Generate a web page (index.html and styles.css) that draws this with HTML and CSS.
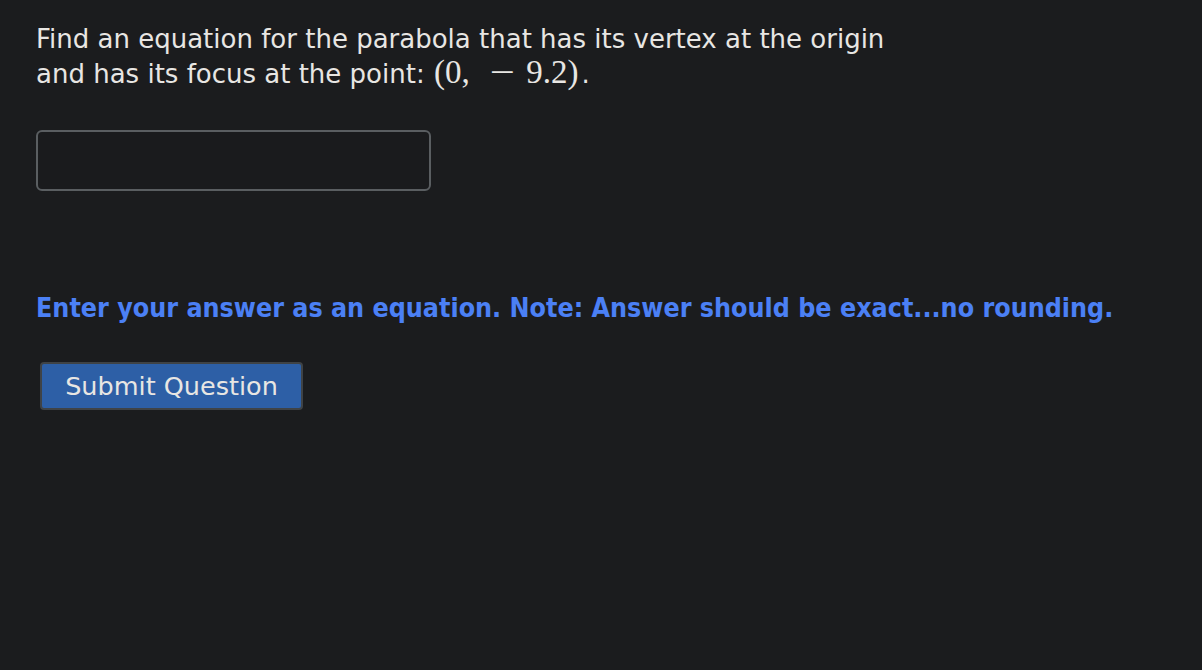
FILE: index.html
```html
<!DOCTYPE html>
<html lang="en">
<head>
  <meta charset="UTF-8">
  <title>Question</title>
  <link rel="stylesheet" href="styles.css">
</head>
<body>

  <div class="question">
    <p class="prompt">
      Find an equation for the parabola that has its vertex at the origin<br>
      and has its focus at the point: <span class="math">(0,<span class="op">&minus;</span>9.2)</span>.
    </p>

    <div class="answer">
      <input type="text" class="answer-box" aria-label="Answer">
    </div>

    <p class="hint">Enter your answer as an equation. Note: Answer should be exact...no rounding.</p>

    <button class="submit">Submit Question</button>
  </div>

</body>
</html>
```

FILE: styles.css
```css
body {
  margin: 0;
  padding: 22px 36px;
  background-color: #1b1c1e;
  color: #e8e6e3;
  font-family: "DejaVu Sans", sans-serif;
  font-size: 26px;
}

.prompt {
  margin: 0;
  line-height: 34px;
}

.math {
  font-family: "Liberation Serif", serif;
  font-size: 33px;
  line-height: 1;
  margin-left: 1px;
  margin-right: 3px;
}

.math .op {
  display: inline-block;
  transform: scaleX(1.35);
  margin: 0 15px 0 23px;
}

.answer {
  margin-top: 39px;
}

.answer-box {
  width: 395px;
  height: 61px;
  box-sizing: border-box;
  background-color: #1a1b1d;
  border: 2px solid #5a5e61;
  border-radius: 6px;
  color: #e8e6e3;
  font-size: 22px;
  padding: 0 10px;
  margin: 0;
}

.hint {
  margin: 100px 0 0 0;
  color: #4b80f5;
  font-family: "DejaVu Sans Condensed", "DejaVu Sans", sans-serif;
  font-size: 26.6px;
  font-weight: bold;
  line-height: 34px;
}

.submit {
  margin: 37px 0 0 4px;
  width: 263px;
  height: 48px;
  background-color: #2d5fa6;
  color: #e8e6e3;
  border: 2px solid #3f4346;
  border-radius: 4px;
  font-family: "DejaVu Sans", sans-serif;
  font-size: 25.5px;
  padding: 0;
  cursor: pointer;
}
```
